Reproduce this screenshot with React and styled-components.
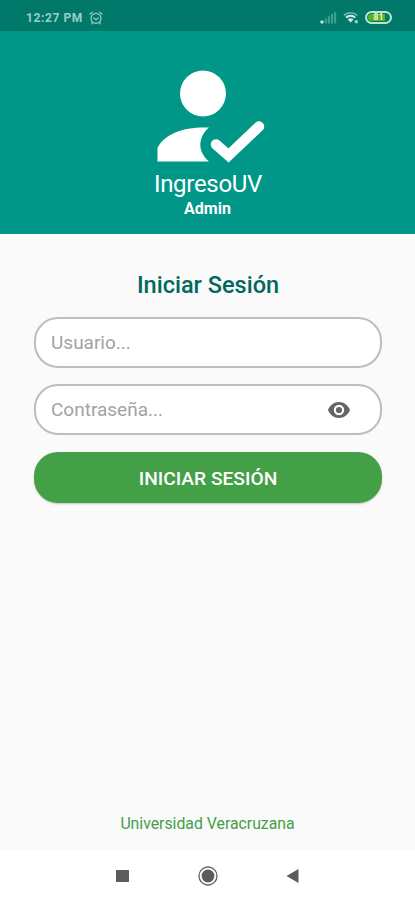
import React, { useState } from 'react';
import styled, { createGlobalStyle } from 'styled-components';

const GlobalStyle = createGlobalStyle`
  * { box-sizing: border-box; }
  body {
    margin: 0;
    background-color: #fafafa;
    font-family: Roboto, sans-serif;
  }
`;

const Screen = styled.div`
  display: flex;
  flex-direction: column;
  height: 100vh;
  overflow: hidden;
`;

const StatusBar = styled.div`
  display: flex;
  justify-content: space-between;
  flex: none;
  height: 31px;
  padding: 4px 23px 0 26px;
  background-color: #00796b;
  color: #9bcdc6;
`;

const StatusGroup = styled.div`
  display: flex;
  align-items: center;
  gap: ${props => props.$gap}px;

  svg { display: block; }
`;

const Clock = styled.span`
  font-size: 12px;
  font-weight: 700;
  letter-spacing: 0.6px;
`;

const Header = styled.header`
  display: flex;
  flex-direction: column;
  align-items: center;
  flex: none;
  height: 203px;
  padding-top: 37px;
  background-color: #009688;
  color: #fff;
`;

const Logo = styled.svg`
  display: block;
  margin-left: 6px;
`;

const Brand = styled.div`
  margin-top: 7px;
  padding-left: 1px;
  font-size: 24px;
  line-height: 28px;
  letter-spacing: -0.3px;
`;

const Role = styled.div`
  margin-top: 1px;
  font-size: 16px;
  font-weight: 700;
  line-height: 20px;
`;

const LoginForm = styled.form`
  display: flex;
  flex-direction: column;
  flex: 1;
  padding: 36px 33px 0 34px;
`;

const Title = styled.h1`
  margin: 0 0 17px;
  color: #00695c;
  font-size: 23.5px;
  font-weight: 500;
  line-height: 30px;
  text-align: center;
`;

const Field = styled.label`
  display: flex;
  align-items: center;
  height: 51px;
  margin-bottom: ${props => props.$gap}px;
  padding: 0 29px 0 15px;
  border: 2px solid #bdbdbd;
  border-radius: 24px;
  background-color: #fff;
`;

const Input = styled.input`
  flex: 1;
  min-width: 0;
  padding: 0;
  border: 0;
  outline: 0;
  background: transparent;
  color: #333;
  font: 400 19px Roboto, sans-serif;

  &::placeholder { color: #a3a3a3; opacity: 1; }
`;

const EyeButton = styled.button`
  display: flex;
  padding: 0;
  border: 0;
  background: transparent;
  color: #666;
`;

const SubmitButton = styled.button`
  height: 51px;
  padding: 1px 0 0;
  border: 0;
  border-radius: 24px;
  background-color: #43a047;
  box-shadow: 0 1px 2px rgba(0, 0, 0, 0.22);
  color: #fff;
  font: 500 19.2px Roboto, sans-serif;
`;

const Footer = styled.footer`
  flex: none;
  height: 37px;
  color: #43a047;
  font-size: 15.8px;
  line-height: 20px;
  text-align: center;
`;

const NavBar = styled.nav`
  display: flex;
  justify-content: center;
  align-items: center;
  gap: 61px;
  flex: none;
  height: 49px;
  padding-right: 1px;
  background-color: #fff;

  svg { display: block; }
`;

const AlarmIcon = () => (
  <svg width="14" height="14" viewBox="0 0 14 14" fill="none" stroke="currentColor" strokeWidth="1.2" strokeLinecap="round">
    <circle cx="7" cy="7.4" r="5" />
    <path d="M1 3.2 3.2 1.2M13 3.2 10.8 1.2M4.8 7 7 8.8 9.2 7M3.5 11.6l-1 1.2M10.5 11.6l1 1.2" />
  </svg>
);

const SignalIcon = () => (
  <svg width="17" height="13" viewBox="0 0 17 13" fill="currentColor">
    <rect x="0.5" y="9.5" width="3" height="3" rx="0.8" fill="#c5e5e0" />
    <g opacity="0.45">
      <rect x="4.8" y="7.5" width="2" height="5" />
      <rect x="7.9" y="5.3" width="2" height="7.2" />
      <rect x="11" y="3" width="2" height="9.5" />
      <rect x="14.1" y="1" width="2" height="11.5" />
    </g>
  </svg>
);

const WifiIcon = () => (
  <svg width="16" height="13" viewBox="0 0 16 13" fill="none">
    <path d="M0.8 4.4C4.5.7 10.8.7 14.4 4.4" stroke="#74b8af" strokeWidth="1.5" />
    <path d="M3 6.6c2.6-2.5 6.6-2.5 9.2 0" stroke="#d5eeea" strokeWidth="2" />
    <path d="M4.7 8.4c1.7-1.5 4.1-1.5 5.8 0l-2.9 3z" fill="#d5eeea" />
    <circle cx="13.3" cy="10.7" r="1.8" fill="#9bcdc6" />
  </svg>
);

const Battery = styled.span`
  display: flex;
  align-items: center;
  justify-content: center;
  width: 27px;
  height: 13px;
  border: 2px solid #bfe2dc;
  border-radius: 6.5px;
  background: linear-gradient(90deg, #55b51b 0 78%, #087c63 78%) padding-box;
  box-shadow: inset 0 0 0 1px #087c63;
  color: #e8f8d0;
  font-size: 9px;
  font-weight: 700;
  line-height: 9px;
`;

const UserCheckLogo = () => (
  <Logo width="108" height="95" viewBox="0 0 108 95" fill="#fff">
    <circle cx="46" cy="25.5" r="23" />
    <path d="M0.5 93.5V80C7 66 27 58.5 52 59.5C41 69 40 83 52 93.5Z" />
    <path d="M59 76.5 71.5 87.5 102 58.5" fill="none" stroke="#fff" strokeWidth="10.5" strokeLinecap="round" />
  </Logo>
);

const EyeIcon = () => (
  <svg width="24" height="18" viewBox="0 0 24 18">
    <path
      d="M12 1C7 1 2.7 4.3 1 9c1.7 4.7 6 8 11 8s9.3-3.3 11-8c-1.7-4.7-6-8-11-8zm0 13.2a5.2 5.2 0 1 1 0-10.4 5.2 5.2 0 0 1 0 10.4zm0-8.3a3.1 3.1 0 1 0 0 6.2 3.1 3.1 0 0 0 0-6.2z"
      fill="currentColor"
      fillRule="evenodd"
    />
  </svg>
);

const App = () => {
  const [visible, setVisible] = useState(false);

  return (
    <>
      <GlobalStyle />
      <Screen>
        <StatusBar>
          <StatusGroup $gap={6}>
            <Clock>12:27 PM</Clock>
            <AlarmIcon />
          </StatusGroup>
          <StatusGroup $gap={6}>
            <SignalIcon />
            <WifiIcon />
            <Battery>81</Battery>
          </StatusGroup>
        </StatusBar>
        <Header>
          <UserCheckLogo />
          <Brand>IngresoUV</Brand>
          <Role>Admin</Role>
        </Header>
        <LoginForm onSubmit={e => e.preventDefault()}>
          <Title>Iniciar Sesión</Title>
          <Field $gap={16}>
            <Input type="text" placeholder="Usuario..." />
          </Field>
          <Field $gap={17}>
            <Input type={visible ? 'text' : 'password'} placeholder="Contraseña..." />
            <EyeButton type="button" aria-label="Mostrar contraseña" onClick={() => setVisible(!visible)}>
              <EyeIcon />
            </EyeButton>
          </Field>
          <SubmitButton type="submit">INICIAR SESIÓN</SubmitButton>
        </LoginForm>
        <Footer>Universidad Veracruzana</Footer>
        <NavBar>
          <svg width="25" height="24" viewBox="0 0 25 24">
            <rect x="6" y="6" width="13" height="12" fill="#5c5c5c" />
          </svg>
          <svg width="24" height="24" viewBox="0 0 24 24">
            <circle cx="12" cy="12" r="9" fill="none" stroke="#606060" strokeWidth="1.3" />
            <circle cx="12" cy="12" r="6.4" fill="#5c5c5c" />
          </svg>
          <svg width="24" height="24" viewBox="0 0 24 24">
            <path d="M5.5 12 17.5 5v14z" fill="#5c5c5c" />
          </svg>
        </NavBar>
      </Screen>
    </>
  );
};

export default App;
